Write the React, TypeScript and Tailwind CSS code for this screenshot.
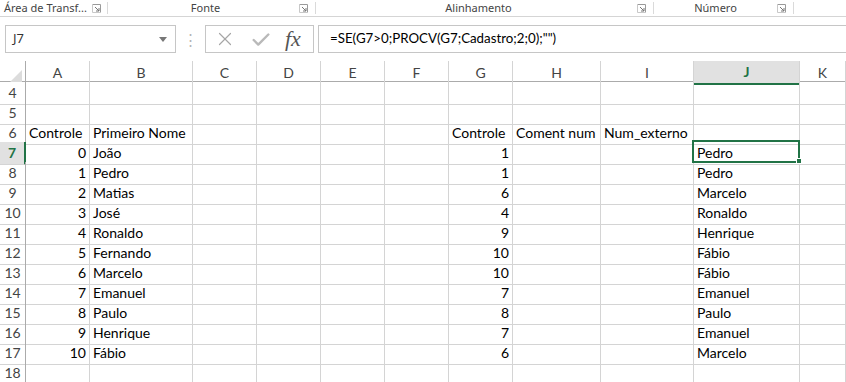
import { Check, X } from "lucide-react";

const cols = ["A", "B", "C", "D", "E", "F", "G", "H", "I", "J", "K"];

const gridCols =
  "grid grid-cols-[26px_64px_103px_64px_64px_64px_64px_64px_88px_93px_106px_1fr]";

const controle = [0, 1, 2, 3, 4, 5, 6, 7, 8, 9, 10];
const nomes = ["João", "Pedro", "Matias", "José", "Ronaldo", "Fernando", "Marcelo", "Emanuel", "Paulo", "Henrique", "Fábio"];
const gVals = [1, 1, 6, 4, 9, 10, 10, 7, 8, 7, 6];
const jVals = ["Pedro", "Pedro", "Marcelo", "Ronaldo", "Henrique", "Fábio", "Fábio", "Emanuel", "Paulo", "Emanuel", "Marcelo"];

type Cell = { text?: string | number; right?: boolean };

function rowData(r: number): Cell[] {
  const empty: Cell[] = cols.map(() => ({}));
  if (r === 6) {
    empty[0] = { text: "Controle" };
    empty[1] = { text: "Primeiro Nome" };
    empty[6] = { text: "Controle" };
    empty[7] = { text: "Coment num" };
    empty[8] = { text: "Num_externo" };
  }
  if (r >= 7 && r <= 17) {
    const i = r - 7;
    empty[0] = { text: controle[i], right: true };
    empty[1] = { text: nomes[i] };
    empty[6] = { text: gVals[i], right: true };
    empty[9] = { text: jVals[i] };
  }
  return empty;
}

function Launcher() {
  return (
    <svg width="9" height="9" viewBox="0 0 9 9" className="shrink-0">
      <path d="M0.5 0.5h8v8" fill="none" stroke="#9a9a9a" strokeWidth="1" />
      <path d="M0.5 0.5v8h8" fill="none" stroke="#c8c8c8" strokeWidth="1" />
      <path d="M3 3l4 4M7 4v3H4" fill="none" stroke="#777" strokeWidth="1" />
    </svg>
  );
}

export default function App() {
  const rows = Array.from({ length: 15 }, (_, i) => i + 4);
  return (
    <div className="relative h-[382px] w-[846px] overflow-hidden bg-white font-['Lato',sans-serif] text-black">
      {/* ribbon group labels */}
      <div className="flex h-[17px] items-center border-b border-[#d5d5d5] font-['Noto_Sans',sans-serif] text-[11px] text-[#444]">
        <div className="flex h-full w-[108px] items-center pl-[4px]">
          <span className="w-[88px] whitespace-nowrap">Área de Transf...</span>
          <Launcher />
          <span className="ml-[6px] h-[12px] w-px bg-[#dadada]" />
        </div>
        <div className="flex h-full w-[208px] items-center">
          <span className="w-[196px] pl-[4px] text-center">Fonte</span>
          <Launcher />
          <span className="ml-[7px] h-[12px] w-px bg-[#dadada]" />
        </div>
        <div className="flex h-full w-[338px] items-center">
          <span className="w-[323px] pl-[4px] text-center">Alinhamento</span>
          <Launcher />
          <span className="ml-[7px] h-[12px] w-px bg-[#dadada]" />
        </div>
        <div className="flex h-full w-[140px] items-center">
          <span className="w-[125px] text-center">Número</span>
          <Launcher />
          <span className="ml-[7px] h-[12px] w-px bg-[#dadada]" />
        </div>
      </div>

      {/* formula bar */}
      <div className="mt-[8px] flex h-[28px] items-stretch">
        <div className="ml-[5px] flex w-[171px] items-center justify-between border border-[#c6c6c6] pl-[7px] pr-[8px] font-['Noto_Sans',sans-serif] text-[13px] text-[#333]">
          <span>J7</span>
          <svg width="8" height="5" viewBox="0 0 8 5">
            <path d="M0 0h8L4 5z" fill="#777" />
          </svg>
        </div>
        <div className="flex w-[29px] items-center justify-center text-[15px] leading-none text-[#b5b5b5]">⋮</div>
        <div className="flex w-[109px] items-center border border-[#c6c6c6] pl-[8px]">
          <X size={22} strokeWidth={1.3} className="text-[#a6a6a6]" />
          <Check size={22} strokeWidth={2.6} className="ml-[14px] mt-[2px] text-[#b9b9b9]" />
          <span className="ml-[13px] font-['Liberation_Serif',serif] text-[22px] italic leading-none text-[#555]">
            fx
          </span>
        </div>
        <div className="ml-[4px] flex flex-1 items-center border-y border-l border-[#c6c6c6] pl-[11px] text-[13.3px]">
          =SE(G7&gt;0;PROCV(G7;Cadastro;2;0);"")
        </div>
      </div>

      {/* sheet */}
      <div className="mt-[8px]">
        <div className={`${gridCols} h-[21px] border-b border-[#ababab] text-[14px] text-[#444]`}>
          <div className="relative border-r border-[#ababab]">
            <svg width="12" height="12" viewBox="0 0 12 12" className="absolute bottom-[3px] right-[3px]">
              <path d="M12 0v12H0z" fill="#dcdcdc" />
            </svg>
          </div>
          {cols.map((c) => (
            <div
              key={c}
              className={
                c === "J"
                  ? "flex items-center justify-center border-r border-b-2 border-r-[#d4d4d4] border-b-[#217346] bg-[#e1e1e1] pb-[1px] font-bold text-[#217346]"
                  : "flex items-center justify-center border-r border-[#d4d4d4] pb-[2px]"
              }
            >
              {c}
            </div>
          ))}
        </div>
        {rows.map((r) => (
          <div key={r} className={`${gridCols} h-[20px] text-[14px]`}>
            <div
              className={
                r === 7
                  ? "flex items-center justify-center border-b border-r-2 border-b-[#d4d4d4] border-r-[#217346] bg-[#e1e1e1] pb-[1px] font-bold text-[#217346]"
                  : "flex items-center justify-center border-b border-r border-b-[#d4d4d4] border-r-[#ababab] pb-[1px] text-[#444]"
              }
            >
              {r}
            </div>
            {rowData(r).map((cell, ci) => (
              <div
                key={ci}
                className={`flex items-end overflow-visible whitespace-nowrap border-b border-r border-[#d4d4d4] px-[3px] pb-[4px] leading-[15px] ${
                  cell.right ? "justify-end" : "justify-start"
                }`}
              >
                {cell.text}
              </div>
            ))}
          </div>
        ))}
      </div>

      {/* active cell J7 */}
      <div className="pointer-events-none absolute left-[692px] top-[140px] h-[23px] w-[108px] border-2 border-[#217346]" />
      <div className="pointer-events-none absolute left-[796px] top-[158px] h-[6px] w-[6px] border border-white bg-[#217346]" />
    </div>
  );
}
